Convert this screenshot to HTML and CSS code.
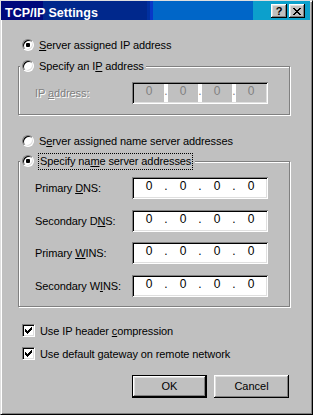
FILE: index.html
```html
<!DOCTYPE html>
<html lang="en">
<head>
  <meta charset="UTF-8" />
  <meta name="viewport" content="width=device-width, initial-scale=1" />
  <title>TCP/IP Settings</title>
  <link rel="stylesheet" href="styles.css">
</head>
<body>

  <div class="window">

    <!-- Barra de titulo -->
    <div class="title-bar">
      <span class="title-text">TCP/IP Settings</span>
      <div class="title-buttons">
        <button type="button" class="title-btn">?</button>
        <button type="button" class="title-btn">
          <svg width="8" height="7" viewBox="0 0 8 7" shape-rendering="crispEdges">
            <path d="M0 0h2v1H0z M6 0h2v1H6z M1 1h2v1H1z M5 1h2v1H5z M2 2h4v1H2z M3 3h2v1H3z M2 4h4v1H2z M1 5h2v1H1z M5 5h2v1H5z M0 6h2v1H0z M6 6h2v1H6z" fill="#000"/>
          </svg>
        </button>
      </div>
    </div>

    <form class="dialog">

      <label class="option">
        <input type="radio" name="ip" checked>
        <span><u>S</u>erver assigned IP address</span>
      </label>

      <fieldset class="group group-ip">
        <legend>
          <label class="option">
            <input type="radio" name="ip">
            <span>Specify an I<u>P</u> address</span>
          </label>
        </legend>
        <div class="field-grid">
          <span class="field-label disabled">IP <u>a</u>ddress:</span>
          <div class="ip-box off">
            <span class="octet">0</span><span class="dot">.</span>
            <span class="octet">0</span><span class="dot">.</span>
            <span class="octet">0</span><span class="dot">.</span>
            <span class="octet">0</span>
          </div>
        </div>
      </fieldset>

      <label class="option option-dns">
        <input type="radio" name="dns">
        <span>S<u>e</u>rver assigned name server addresses</span>
      </label>

      <fieldset class="group group-dns">
        <legend>
          <label class="option">
            <input type="radio" name="dns" checked>
            <span class="focus">Specify na<u>m</u>e server addresses</span>
          </label>
        </legend>
        <div class="field-grid">
          <span class="field-label">Primary <u>D</u>NS:</span>
          <div class="ip-box">
            <span class="octet">0</span><span class="dot">.</span>
            <span class="octet">0</span><span class="dot">.</span>
            <span class="octet">0</span><span class="dot">.</span>
            <span class="octet">0</span>
          </div>

          <span class="field-label">Secondary D<u>N</u>S:</span>
          <div class="ip-box">
            <span class="octet">0</span><span class="dot">.</span>
            <span class="octet">0</span><span class="dot">.</span>
            <span class="octet">0</span><span class="dot">.</span>
            <span class="octet">0</span>
          </div>

          <span class="field-label">Primary <u>W</u>INS:</span>
          <div class="ip-box">
            <span class="octet">0</span><span class="dot">.</span>
            <span class="octet">0</span><span class="dot">.</span>
            <span class="octet">0</span><span class="dot">.</span>
            <span class="octet">0</span>
          </div>

          <span class="field-label">Secondary W<u>I</u>NS:</span>
          <div class="ip-box">
            <span class="octet">0</span><span class="dot">.</span>
            <span class="octet">0</span><span class="dot">.</span>
            <span class="octet">0</span><span class="dot">.</span>
            <span class="octet">0</span>
          </div>
        </div>
      </fieldset>

      <label class="option check-first">
        <span class="checkbox">
          <svg width="7" height="7" viewBox="0 0 7 7" shape-rendering="crispEdges">
            <path d="M6 0h1v1H6z M5 1h2v1H5z M0 2h1v1H0z M4 2h3v1H4z M0 3h2v1H0z M3 3h3v1H3z M0 4h5v1H0z M1 5h3v1H1z M2 6h1v1H2z" fill="#000"/>
          </svg>
        </span>
        <span>Use IP header <u>c</u>ompression</span>
      </label>

      <label class="option check-second">
        <span class="checkbox">
          <svg width="7" height="7" viewBox="0 0 7 7" shape-rendering="crispEdges">
            <path d="M6 0h1v1H6z M5 1h2v1H5z M0 2h1v1H0z M4 2h3v1H4z M0 3h2v1H0z M3 3h3v1H3z M0 4h5v1H0z M1 5h3v1H1z M2 6h1v1H2z" fill="#000"/>
          </svg>
        </span>
        <span>Use default <u>g</u>ateway on remote network</span>
      </label>

      <div class="buttons">
        <button type="submit" class="btn btn-default">OK</button>
        <button type="button" class="btn">Cancel</button>
      </div>

    </form>
  </div>

</body>
</html>
```

FILE: styles.css
```css
:root {
  --face: #c0c0c0;
  --light: #dfdfdf;
  --highlight: #ffffff;
  --shadow: #808080;
  --dark: #000000;
  --font: 'Liberation Sans', Arial, sans-serif;
}

* {
  margin: 0;
  padding: 0;
  box-sizing: border-box;
}

body {
  font-family: var(--font);
  font-size: 11px;
  letter-spacing: -0.1px;
  color: #000;
  background: var(--face);
}

/* Ventana */
.window {
  width: 313px;
  height: 415px;
  border: 1px solid;
  border-color: var(--light) var(--dark) var(--dark) var(--light);
  box-shadow: inset 1px 1px var(--highlight), inset -1px -1px var(--shadow);
  padding: 0 2px 2px 0;
  background: var(--face);
}

.title-bar {
  height: 19px;
  display: flex;
  align-items: flex-start;
  justify-content: space-between;
  padding: 3px 5px 0 4px;
  background: linear-gradient(to right,
    #00087c 0 42px,
    #00288c 42px 146px,
    #0030a0 146px 149px,
    #0838c8 149px 152px,
    #0066c8 152px 252px,
    #0ca0cc 252px);
  color: #fff;
}

.title-text {
  font-size: 12.5px;
  font-weight: bold;
  letter-spacing: 0;
  line-height: 14px;
  padding-top: 2px;
}

.title-buttons {
  display: flex;
  gap: 2px;
}

.title-btn {
  width: 16px;
  height: 14px;
  display: flex;
  align-items: center;
  justify-content: center;
  border: none;
  background: var(--face);
  box-shadow: inset -1px -1px var(--dark), inset 1px 1px var(--highlight),
              inset -2px -2px var(--shadow), inset 2px 2px var(--light);
  font: bold 11px var(--font);
  color: #000;
  line-height: 1;
}

/* Contenido del dialogo */
.dialog {
  padding: 17px 0 0 17px;
  display: flex;
  flex-direction: column;
  align-items: flex-start;
}

.option {
  display: flex;
  align-items: center;
  gap: 5px;
  height: 16px;
  line-height: 16px;
  margin-left: 4px;
  white-space: nowrap;
}

.option input[type="radio"] {
  appearance: none;
  width: 12px;
  height: 12px;
  border-radius: 50%;
  border: 1px solid;
  border-color: var(--shadow) var(--highlight) var(--highlight) var(--shadow);
  box-shadow: inset 1px 1px var(--dark), inset -1px -1px var(--light);
  background: #fff;
}

.option input[type="radio"]:checked {
  background: radial-gradient(circle, #000 0 2px, #fff 2.5px);
}

.focus {
  border: 1px dotted #000;
  padding: 0 1px;
  margin-left: -1px;
  line-height: 15px;
}

/* Grupos */
.group {
  width: 272px;
  border: 1px solid var(--shadow);
  box-shadow: inset 1px 1px var(--highlight), 1px 1px var(--highlight);
  padding: 8px 0 10px 0;
}

.group legend {
  margin-left: 1px;
  padding: 0 2px;
  background: var(--face);
}

.group legend .option {
  margin-left: 0;
}

.group-ip {
  margin-top: 5px;
}

.option-dns {
  margin-top: 18px;
}

.group-dns {
  margin-top: 4px;
  padding-bottom: 9px;
}

.field-grid {
  display: grid;
  grid-template-columns: 97px 136px;
  row-gap: 10.5px;
  align-items: center;
  margin-left: 16px;
}

.field-label.disabled {
  color: var(--shadow);
  text-shadow: 1px 1px var(--highlight);
}

.ip-box {
  height: 22px;
  display: flex;
  padding: 2px;
  background: #fff;
  box-shadow: inset 1px 1px var(--shadow), inset -1px -1px var(--highlight),
              inset 2px 2px var(--dark), inset -2px -2px var(--light);
  font-size: 12px;
  letter-spacing: 0;
  line-height: 14px;
}

.octet {
  width: 30px;
  text-align: center;
}

.dot {
  width: 4px;
  text-align: center;
}

.ip-box.off .octet {
  height: 18px;
  background: var(--face);
  color: var(--shadow);
}

.ip-box.off .dot {
  color: var(--shadow);
}

/* Casillas */
.checkbox {
  width: 13px;
  height: 13px;
  display: flex;
  align-items: center;
  justify-content: center;
  border: 1px solid;
  border-color: var(--shadow) var(--highlight) var(--highlight) var(--shadow);
  box-shadow: inset 1px 1px var(--dark), inset -1px -1px var(--light);
  background: #fff;
}

.check-first {
  margin-top: 16px;
}

.check-second {
  margin-top: 7px;
}

/* Botones */
.buttons {
  width: 271px;
  margin-top: 13px;
  display: flex;
  justify-content: flex-end;
  gap: 7px;
}

.btn {
  width: 75px;
  height: 23px;
  border: none;
  background: var(--face);
  box-shadow: inset -1px -1px var(--dark), inset 1px 1px var(--highlight),
              inset -2px -2px var(--shadow), inset 2px 2px var(--light);
  font: 11px var(--font);
  color: #000;
}

.btn-default {
  border: 1px solid var(--dark);
}
```
